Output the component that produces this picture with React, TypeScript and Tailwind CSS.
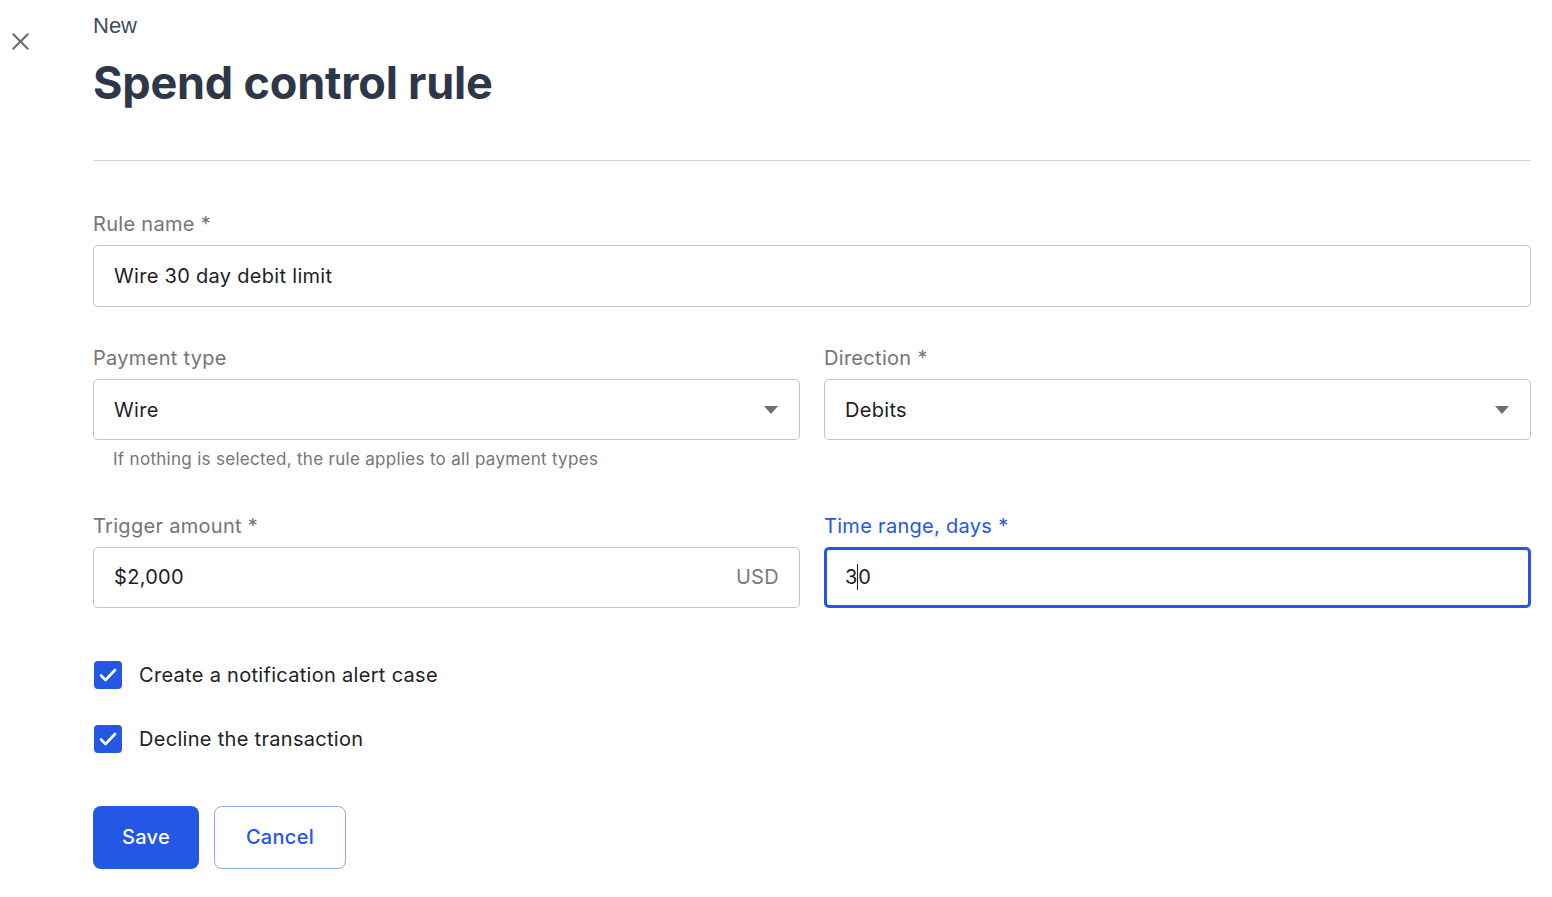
import { X } from "lucide-react";

const Label = ({ text, active }: { text: string; active?: boolean }) => (
  <label
    className={`block text-[20px] leading-[24px] mb-[9px] tracking-[0.3px] ${
      active ? "text-[#2457e3]" : "text-[#757575]"
    }`}
  >
    {text}
  </label>
);

const Caret = () => (
  <svg width="14" height="8" viewBox="0 0 14 8" className="text-[#6f6f6f]">
    <path d="M0 0h14L7 8z" fill="currentColor" />
  </svg>
);

const Check = ({ label }: { label: string }) => (
  <div className="flex items-center gap-[17px]">
    <span className="w-[28px] h-[28px] rounded-[4px] bg-[#2457e3] flex items-center justify-center">
      <svg width="20" height="16" viewBox="0 0 20 16" fill="none">
        <path
          d="M3 8.5l4.5 4.5L17 3"
          stroke="white"
          strokeWidth="2.6"
          strokeLinecap="round"
          strokeLinejoin="round"
        />
      </svg>
    </span>
    <span className="text-[20px] text-[#222] tracking-[0.3px]">{label}</span>
  </div>
);

export default function App() {
  return (
    <div
      className="min-h-screen bg-white flex"
      style={{ fontFamily: "'Inter', 'Liberation Sans', sans-serif" }}
    >
      <div className="w-[93px] shrink-0 pt-[27px] pl-[6px]">
        <X className="w-[29px] h-[29px] text-[#6b6b6b]" strokeWidth={1.7} />
      </div>
      <div className="flex-1 pr-[21px]">
        <div
          className="pt-[11px] text-[22px] leading-[30px] text-[#3f4a5a]"
          style={{ fontFamily: "'Liberation Sans', sans-serif" }}
        >
          New
        </div>
        <h1 className="mt-[14px] text-[45px] leading-[56px] font-bold text-[#2d3748] tracking-[-0.2px]">
          Spend control rule
        </h1>
        <div className="mt-[49px] h-px bg-[#cfd6e0]" />

        <div className="mt-[51px]">
          <Label text="Rule name *" />
          <div className="h-[62px] border border-[#c4c4c4] rounded-[5px] px-[20px] flex items-center text-[20px] text-[#1e1e1e] tracking-[0.3px]">
            Wire 30 day debit limit
          </div>
        </div>

        <div className="mt-[39px] grid grid-cols-2 gap-[24px]">
          <div>
            <Label text="Payment type" />
            <div className="h-[61px] border border-[#c4c4c4] rounded-[5px] pl-[20px] pr-[21px] flex items-center justify-between text-[20px] text-[#1e1e1e] tracking-[0.3px]">
              <span>Wire</span>
              <Caret />
            </div>
            <p className="mt-[7px] pl-[20px] text-[17px] text-[#757575] tracking-[0.3px]">
              If nothing is selected, the rule applies to all payment types
            </p>
          </div>
          <div>
            <Label text="Direction *" />
            <div className="h-[61px] border border-[#c4c4c4] rounded-[5px] pl-[20px] pr-[21px] flex items-center justify-between text-[20px] text-[#1e1e1e] tracking-[0.3px]">
              <span>Debits</span>
              <Caret />
            </div>
          </div>
        </div>

        <div className="mt-[41px] grid grid-cols-2 gap-[24px]">
          <div>
            <Label text="Trigger amount *" />
            <div className="h-[61px] border border-[#c4c4c4] rounded-[5px] px-[20px] flex items-center justify-between text-[20px] tracking-[0.3px]">
              <span className="text-[#1e1e1e]">$2,000</span>
              <span className="text-[#7a7a7a]">USD</span>
            </div>
          </div>
          <div>
            <Label text="Time range, days *" active />
            <div className="h-[61px] border-[3px] border-[#2457e3] rounded-[5px] px-[18px] flex items-center text-[20px] text-[#1e1e1e]">
              <span>3</span>
              <span className="w-px h-[26px] bg-[#1e1e1e]" />
              <span>0</span>
            </div>
          </div>
        </div>

        <div className="mt-[52px] pl-[1px] flex flex-col gap-[34px]">
          <Check label="Create a notification alert case" />
          <Check label="Decline the transaction" />
        </div>

        <div className="mt-[52px] flex gap-[15px]">
          <button className="h-[63px] w-[106px] rounded-[8px] bg-[#2457e3] text-white text-[20px] font-medium tracking-[0.3px]">
            Save
          </button>
          <button className="h-[63px] w-[132px] rounded-[8px] border border-[#8ea8ef] text-[#2457e3] text-[20px] font-medium tracking-[0.3px]">
            Cancel
          </button>
        </div>
      </div>
    </div>
  );
}
